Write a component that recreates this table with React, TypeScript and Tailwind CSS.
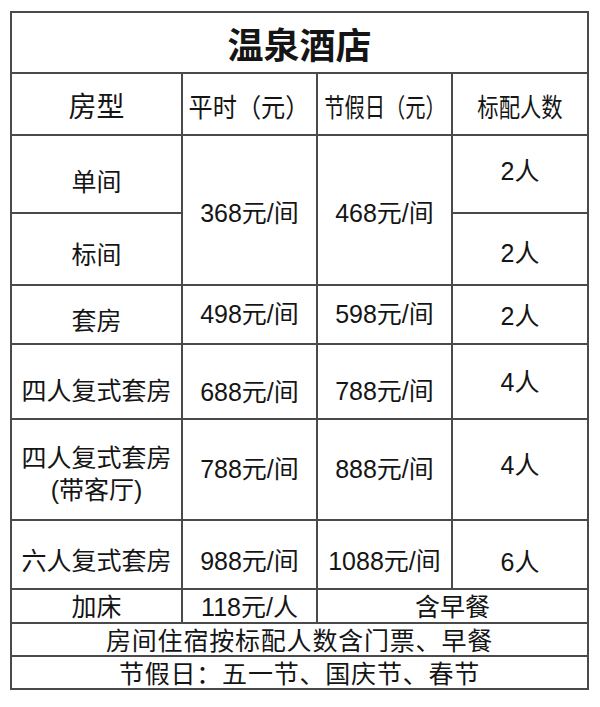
export default function App() {
  const c = "bg-white flex items-center justify-center text-[#151515] text-[25px] leading-none whitespace-nowrap";
  return (
    <div className="w-[600px] h-[707px] bg-white pt-[11px] pl-[10px] font-['Liberation_Sans','Noto_Sans_CJK_SC',sans-serif]">
      <div className="w-[579px] grid grid-cols-[169px_133px_133px_134px] grid-rows-[59px_60px_76px_70px_57px_73px_99px_67px_32px_31px_31px] gap-[2px] p-[2px] bg-[#4a4a4a]">
        <div className={`${c} col-span-4 text-[36px] font-bold pt-[8px]`}>温泉酒店</div>

        <div className={`${c} text-[28px] pt-[8px]`}>房型</div>
        <div className={`${c} text-[26px] pt-[8px]`}><span className="inline-block scale-x-[0.93]">平时（元）</span></div>
        <div className={`${c} text-[26px] pt-[8px]`}><span className="inline-block scale-x-[0.78]">节假日（元）</span></div>
        <div className={`${c} text-[26px] pt-[8px]`}><span className="inline-block scale-x-[0.82]">标配人数</span></div>

        <div className={`${c} pt-[16px]`}>单间</div>
        <div className={`${c} row-span-2 pt-[6px]`}>368元/间</div>
        <div className={`${c} row-span-2 pt-[6px]`}>468元/间</div>
        <div className={`${c} pb-[6px]`}>2人</div>

        <div className={`${c} pt-[12px]`}>标间</div>
        <div className={`${c} pt-[8px]`}>2人</div>

        <div className={`${c} pt-[14px]`}>套房</div>
        <div className={c}>498元/间</div>
        <div className={c}>598元/间</div>
        <div className={`${c} pt-[4px]`}>2人</div>

        <div className={`${c} pt-[20px]`}>四人复式套房</div>
        <div className={`${c} pt-[22px]`}>688元/间</div>
        <div className={`${c} pt-[20px]`}>788元/间</div>
        <div className={`${c} pt-[2px]`}>4人</div>

        <div className={`${c} flex-col pt-[9px]`}>
          <div className="leading-[32px]">四人复式套房</div>
          <div className="leading-[32px]">(带客厅)</div>
        </div>
        <div className={c}>788元/间</div>
        <div className={c}>888元/间</div>
        <div className={`${c} pb-[8px]`}>4人</div>

        <div className={`${c} pt-[14px]`}>六人复式套房</div>
        <div className={`${c} pt-[14px]`}>988元/间</div>
        <div className={`${c} pt-[14px]`}>1088元/间</div>
        <div className={`${c} pt-[16px]`}>6人</div>

        <div className={`${c} pt-[2px]`}>加床</div>
        <div className={`${c} pt-[2px]`}>118元/人</div>
        <div className={`${c} col-span-2 pt-[2px]`}>含早餐</div>

        <div className={`${c} col-span-4 pt-[4px] tracking-[0.8px]`}>房间住宿按标配人数含门票、早餐</div>
        <div className={`${c} col-span-4 pt-[4px] tracking-[0.8px]`}>节假日：五一节、国庆节、春节</div>
      </div>
    </div>
  );
}
